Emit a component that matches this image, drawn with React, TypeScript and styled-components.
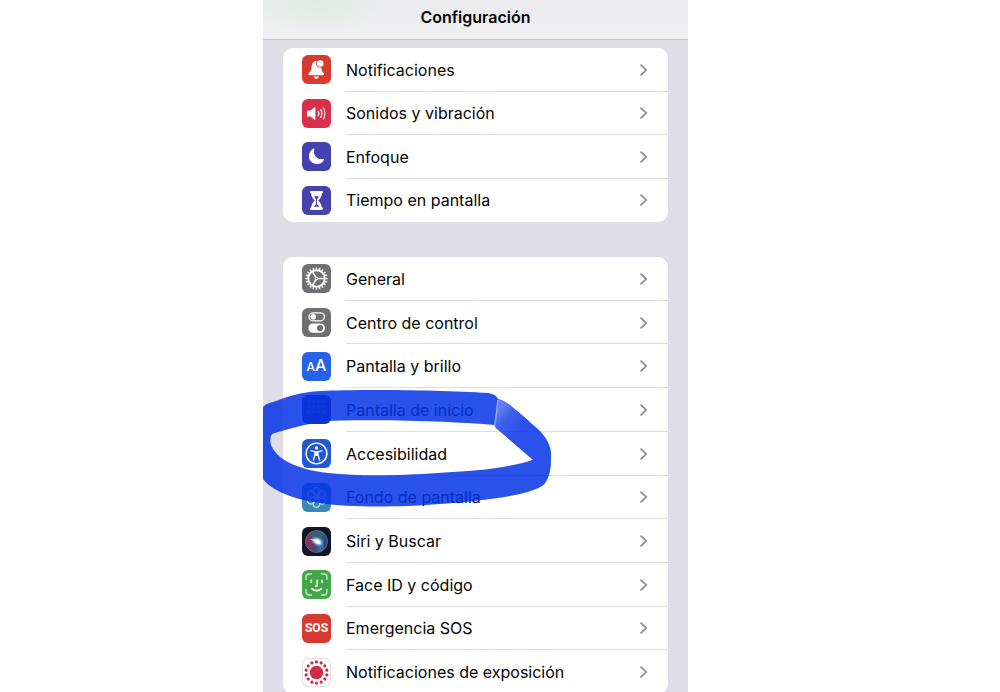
import React from "react";
import styled, { createGlobalStyle } from "styled-components";

const GlobalStyle = createGlobalStyle`
  *, *::before, *::after { box-sizing: border-box; }
  html, body, #root { height: 100%; }
  body {
    margin: 0;
    background: #fff;
    color: #050505;
    font-family: Inter, "Liberation Sans", sans-serif;
    -webkit-font-smoothing: antialiased;
  }
`;

const Page = styled.div`
  display: grid;
  grid-template-columns: 263fr 425fr 312fr;
  height: 100vh;
  overflow: hidden;
`;

const Phone = styled.main`
  position: relative;
  grid-column: 2;
  min-width: 0;
  min-height: 100vh;
  background: #dfdee6;
`;

const Header = styled.header`
  display: flex;
  align-items: center;
  justify-content: center;
  height: 40px;
  padding-bottom: 6px;
  border-bottom: 1px solid #c6c5cc;
  background:
    radial-gradient(ellipse 70px 40px at 56px 0, #e0ede1, transparent),
    linear-gradient(#ebebee, #f0f0f3);
`;

const Title = styled.h1`
  margin: 0;
  font-size: 16px;
  line-height: 20px;
  font-weight: 600;
`;

const Content = styled.nav`
  display: flex;
  flex-direction: column;
  gap: 35px;
  padding: 8px 20px;
`;

const Group = styled.ul<{ $height: number }>`
  display: grid;
  grid-auto-rows: 1fr;
  min-height: ${(p) => p.$height}px;
  margin: 0;
  padding: 0;
  list-style: none;
  border-radius: 10px;
  background: #fff;
  overflow: hidden;
`;

const Row = styled.a`
  display: flex;
  gap: 15px;
  height: 100%;
  padding-left: 19px;
  align-items: center;
  color: inherit;
  text-decoration: none;
`;

const RowBody = styled.span<{ $last: boolean }>`
  display: flex;
  flex: 1;
  align-items: center;
  justify-content: space-between;
  align-self: stretch;
  min-width: 0;
  padding-top: 1px;
  padding-right: 20px;
  border-bottom: 1px solid ${(p) => (p.$last ? "transparent" : "#dddde0")};
`;

const Label = styled.span`
  font-size: 16px;
  line-height: 20px;
  white-space: nowrap;
`;

const Tile = styled.span<{ $bg: string; $outline?: boolean }>`
  display: flex;
  flex: none;
  align-items: center;
  justify-content: center;
  width: 29px;
  height: 29px;
  border-radius: 6px;
  background: ${(p) => p.$bg};
  box-shadow: ${(p) => (p.$outline ? "inset 0 0 0 1px #e2e2e4" : "none")};
  color: #fff;
  overflow: hidden;

  svg { display: block; }
`;

const Letters = styled.span`
  display: flex;
  align-items: baseline;
  font-size: 16px;
  line-height: 20px;
  font-weight: 500;

  small { font-size: 12px; }
`;

const Sos = styled.span`
  font-family: Roboto, "Liberation Sans", sans-serif;
  font-size: 12px;
  line-height: 20px;
  font-weight: 700;
`;

const Marker = styled.svg`
  position: absolute;
  top: 380px;
  left: 0;
  pointer-events: none;
`;

const Glyph = ({ children }: { children: React.ReactNode }) => (
  <svg width="29" height="29" viewBox="0 0 29 29" fill="none" aria-hidden="true">
    {children}
  </svg>
);

const Chevron = () => (
  <svg width="9" height="14" viewBox="0 0 9 14" fill="none" aria-hidden="true">
    <path d="M1.5 1.7 7.2 7l-5.7 5.3" stroke="#8b8b8f" strokeWidth="1.7" />
  </svg>
);

const spokes = (count: number) => Array.from({ length: count }, (_, i) => (i * 360) / count);

const Bell = () => (
  <Glyph>
    <path
      d="M14.500 5.800c-3.200.4-4.700 3-4.900 6-.2 3.600-1 4.700-2.600 6.300-1 1-.6 2.100.7 2.100h13.200c1.300 0 1.700-1.100.7-2.100-1.300-1.300-1.900-2.500-2.100-5.300l-4-2.300z"
      fill="#fff"
    />
    <circle cx="18.200" cy="8.500" r="4.100" fill="#d83a30" />
    <circle cx="18.200" cy="8.500" r="3.300" fill="#fff" />
    <path d="M11.800 21.400h5c-.3 1.500-1.200 2.300-2.500 2.300s-2.200-.8-2.500-2.300z" fill="#fff" />
  </Glyph>
);

const Speaker = () => (
  <Glyph>
    <path d="M5 12.600c0-.6.400-1 1-1h2.600l3.600-3.100c.6-.5 1.200-.2 1.200.5v11c0 .7-.6 1-1.200.5l-3.600-3.100H6c-.6 0-1-.4-1-1z" fill="#fff" />
    <path
      d="M16.200 12.300c.8 1.300.8 3.100 0 4.400M18.700 10.600c1.500 2.300 1.500 5.500 0 7.800M21.300 9c2.200 3.200 2.200 7.800 0 11"
      stroke="#fff"
      strokeWidth="1.200"
      strokeLinecap="round"
    />
  </Glyph>
);

const Moon = () => (
  <Glyph>
    <path d="M11.600 6.500c.5-.2.900.2.700.7-1.700 5.500 2.600 11 9.200 9.700.6-.1.900.3.600.8A8 8 0 0 1 7 14c0-3.400 1.900-6.200 4.600-7.500z" fill="#fff" />
  </Glyph>
);

const Hourglass = () => (
  <Glyph>
    <path
      d="M9.300 5h10.400c.8 0 1.300.5 1.300 1.200s-.5 1.200-1.200 1.200c0 3.200-1.700 4.900-3.500 7.100 1.800 2.200 3.500 3.900 3.500 7.100.7 0 1.200.5 1.200 1.200s-.5 1.200-1.300 1.200H9.300c-.8 0-1.300-.5-1.300-1.200s.5-1.200 1.200-1.200c0-3.200 1.700-4.900 3.500-7.100-1.800-2.200-3.500-3.900-3.500-7.100C8.500 7.400 8 6.900 8 6.200S8.500 5 9.300 5z"
      fill="#fff"
    />
    <path d="M12 10.300h5l-2 3.100v4.800l2.500 2.600h-6l2.500-2.600v-4.800z" fill="#4541ae" />
  </Glyph>
);

const Gear = () => (
  <Glyph>
    {spokes(20).map((a) => (
      <path key={a} d="M13.600 5.500l.4-2.300h1l.4 2.300z" fill="#fff" transform={`rotate(${a} 14.500 14.500)`} />
    ))}
    <circle cx="14.500" cy="14.500" r="8.200" stroke="#fff" strokeWidth="1.900" />
    <path d="M14.500 14.500h7.800M14.500 14.500l-4-6.900M14.500 14.500l-4 6.900" stroke="#fff" strokeWidth="1.600" />
    <circle cx="14.500" cy="14.500" r="1.300" fill="#6f6f74" stroke="#fff" strokeWidth="1" />
  </Glyph>
);

const Switches = () => (
  <Glyph>
    <rect x="7" y="4.800" width="15.400" height="8" rx="4" stroke="#fff" strokeWidth="1.300" />
    <circle cx="11.200" cy="8.800" r="2.800" fill="#fff" />
    <rect x="6.400" y="15.400" width="16.600" height="9.400" rx="4.700" fill="#fff" />
    <circle cx="18" cy="20.100" r="3.100" fill="#6f6f74" />
  </Glyph>
);

const HomeGrid = () => (
  <Glyph>
    {[5, 10, 15, 20].map((x) =>
      [5, 10, 15].map((y) => (
        <rect key={`${x}-${y}`} x={x} y={y} width="3.600" height="3.600" rx="1" fill="#4661c8" />
      ))
    )}
  </Glyph>
);

const Person = () => (
  <Glyph>
    <circle cx="14.500" cy="14.500" r="10.400" stroke="#fff" strokeWidth="1.400" />
    <circle cx="14.500" cy="8.900" r="1.700" fill="#fff" />
    <path
      d="M9 11.800l4 .9v3.200l-1.700 5.300M20 11.800l-4 .9v3.200l1.700 5.300M13 12.700h3M13 16h3"
      stroke="#fff"
      strokeWidth="1.300"
      strokeLinecap="round"
      strokeLinejoin="round"
    />
    <path d="M12.800 12.300h3.400v4.200h-3.400z" fill="#fff" />
  </Glyph>
);

const Flower = () => (
  <Glyph>
    {spokes(6).map((a) => (
      <ellipse
        key={a}
        cx="14.500"
        cy="8.600"
        rx="3.300"
        ry="4"
        stroke="#b9dcec"
        strokeWidth="1.400"
        transform={`rotate(${a} 14.500 14.500)`}
      />
    ))}
    <circle cx="14.500" cy="14.500" r="2.400" fill="#b9dcec" />
  </Glyph>
);

const Siri = () => (
  <Glyph>
    <defs>
      <radialGradient id="siri-core">
        <stop offset="0" stopColor="#fff" />
        <stop offset=".35" stopColor="#e6f2fc" stopOpacity=".9" />
        <stop offset="1" stopColor="#6aa7e8" stopOpacity="0" />
      </radialGradient>
      <linearGradient id="siri-orb" x1="0" y1="0.500" x2="1" y2="0.600">
        <stop offset="0" stopColor="#8a2f5c" />
        <stop offset=".4" stopColor="#5c3f68" />
        <stop offset=".7" stopColor="#2a5f8e" />
        <stop offset="1" stopColor="#223a7c" />
      </linearGradient>
    </defs>
    <circle cx="14.500" cy="14.500" r="11" fill="url(#siri-orb)" />
    <path d="M6 9c4-6 13-6 17 1-5-2-8 0-9 3-1-3-4-4-8-4z" fill="#286c70" opacity=".7" />
    <path d="M14 14c4 1 7 3 9 7-2 3-5 4-8 4 1-4 1-7-1-11z" fill="#287f9d" opacity=".5" />
    <circle cx="14.500" cy="14.500" r="11" stroke="#8a91ad" strokeWidth=".8" opacity=".7" />
    <ellipse cx="15.500" cy="14.500" rx="7.500" ry="5" fill="url(#siri-core)" transform="rotate(25 15.500 14.500)" />
    <path d="M7.500 12c4-.2 6 .3 8.500.5l3.500 5c-3 0-4.500-1-6-2.500z" fill="#fff" opacity=".55" />
  </Glyph>
);

const FaceId = () => (
  <Glyph>
    <path
      d="M4 9.500V7c0-2 1-3 3-3h2.500M19.500 4H22c2 0 3 1 3 3v2.500M25 19.500V22c0 2-1 3-3 3h-2.500M9.500 25H7c-2 0-3-1-3-3v-2.500"
      stroke="#c4e8c5"
      strokeWidth="1.400"
      strokeLinecap="round"
    />
    <path
      d="M9.300 10.300v2M20 10.300v2M15.200 10.300v4.700c0 .8-.4 1.100-1.300 1.100M10 18.800c2.600 2.400 6.600 2.400 9.200 0"
      stroke="#fff"
      strokeWidth="1.700"
      strokeLinecap="round"
    />
  </Glyph>
);

const Exposure = () => (
  <Glyph>
    <circle cx="14.500" cy="14.500" r="6.700" fill="#d42a45" />
    {spokes(14).map((a) => (
      <circle key={a} cx="14.500" cy="3.900" r="1.600" fill="#d42a45" transform={`rotate(${a} 14.500 14.500)`} />
    ))}
  </Glyph>
);

type Item = { label: string; bg: string; icon: React.ReactNode; outline?: boolean };

const alerts: Item[] = [
  { label: "Notificaciones", bg: "#d83a30", icon: <Bell /> },
  { label: "Sonidos y vibración", bg: "#d7304b", icon: <Speaker /> },
  { label: "Enfoque", bg: "#4541ae", icon: <Moon /> },
  { label: "Tiempo en pantalla", bg: "#4541ae", icon: <Hourglass /> },
];

const system: Item[] = [
  { label: "General", bg: "#6f6f74", icon: <Gear /> },
  { label: "Centro de control", bg: "#6f6f74", icon: <Switches /> },
  { label: "Pantalla y brillo", bg: "#2562e6", icon: <Letters><small>A</small>A</Letters> },
  { label: "Pantalla de inicio", bg: "#23349c", icon: <HomeGrid /> },
  { label: "Accesibilidad", bg: "#2158d6", icon: <Person /> },
  { label: "Fondo de pantalla", bg: "#3c88b4", icon: <Flower /> },
  { label: "Siri y Buscar", bg: "#15142b", icon: <Siri /> },
  { label: "Face ID y código", bg: "#43a648", icon: <FaceId /> },
  { label: "Emergencia SOS", bg: "#d93a2f", icon: <Sos>SOS</Sos> },
  { label: "Notificaciones de exposición", bg: "#fff", icon: <Exposure />, outline: true },
];

const SettingsGroup = ({ items, height }: { items: Item[]; height: number }) => (
  <Group $height={height}>
    {items.map((item, i) => (
      <li key={item.label}>
        <Row href="#">
          <Tile $bg={item.bg} $outline={item.outline}>{item.icon}</Tile>
          <RowBody $last={i === items.length - 1}>
            <Label>{item.label}</Label>
            <Chevron />
          </RowBody>
        </Row>
      </li>
    ))}
  </Group>
);

const HighlightStroke = () => (
  <Marker width="300" height="140" viewBox="0 0 300 140" aria-hidden="true">
    <defs>
      <linearGradient id="ink-seam" x1="234" y1="32" x2="256" y2="50" gradientUnits="userSpaceOnUse">
        <stop offset="0" stopColor="#4768ec" />
        <stop offset=".4" stopColor="#1c45e8" />
        <stop offset="1" stopColor="#0533e6" />
      </linearGradient>
    </defs>
    <g opacity=".85">
      <path
        d="M0 27C3 24 6 23 10 22C24 17 37 12 58 11C95 9 178 10 225 13C231 14 234 16 235 19L232 45C190 41 100 39 65 41C45 43 25 49 9 54C7 57 7 62 8 65C14 79 32 89 65 93C110 98 160 94 205 91C235 89 258 84 270 80L288 72C288 91 286 101 279 106C262 117 205 123 145 126C80 128 45 124 22 114C10 109 4 104 0 99Z"
        fill="#0533e6"
      />
      <path d="M235 19C240 20 244 23 248 26L275 49C284 58 288 66 288 74C288 84 288 92 284 99L262 83L270 80L233 48L231 44Z" fill="#0533e6" />
      <path d="M235 19C240 20 244 23 248 26L266 41L250 62L233 48L231 44Z" fill="url(#ink-seam)" />
      <path d="M235 20L232 45" stroke="#7c94f3" strokeWidth="1.500" />
    </g>
  </Marker>
);

export default function App() {
  return (
    <>
      <GlobalStyle />
      <Page>
        <Phone>
          <Header>
            <Title>Configuración</Title>
          </Header>
          <Content aria-label="Configuración">
            <SettingsGroup items={alerts} height={174} />
            <SettingsGroup items={system} height={437} />
          </Content>
          <HighlightStroke />
        </Phone>
      </Page>
    </>
  );
}
